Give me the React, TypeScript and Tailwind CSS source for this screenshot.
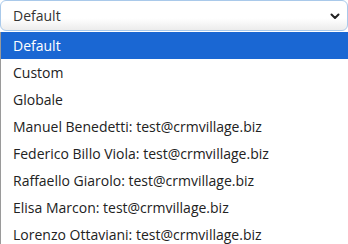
const options = [
  "Default",
  "Custom",
  "Globale",
  "Manuel Benedetti: test@crmvillage.biz",
  "Federico Billo Viola: test@crmvillage.biz",
  "Raffaello Giarolo: test@crmvillage.biz",
  "Elisa Marcon: test@crmvillage.biz",
  "Lorenzo Ottaviani: test@crmvillage.biz",
];

export default function App() {
  return (
    <div className="h-[244px] w-[348px] overflow-hidden bg-white font-['Open_Sans',sans-serif] text-[14px]">
      {/* Select */}
      <div className="flex h-[31px] items-center justify-between rounded-[6px] border border-[#a9c9ea] bg-gradient-to-b from-white from-60% to-[#ececec] pl-[12px] pr-[6px] text-[#333]">
        <span>Default</span>
        <svg width="12" height="12" viewBox="0 0 12 12" fill="none">
          <path d="M2.5 4.5 6 8l3.5-3.5" stroke="#222" strokeWidth="2" strokeLinecap="round" strokeLinejoin="round" />
        </svg>
      </div>

      {/* Dropdown list */}
      <ul className="mt-px border-l border-[#9a9a9a]">
        {options.map((o, i) => (
          <li
            key={o}
            className={
              i === 0
                ? "flex h-[27px] items-center bg-[#1a67d3] pl-[12px] text-white"
                : "flex h-[27px] items-center pl-[12px] text-[#222]"
            }
          >
            {o}
          </li>
        ))}
      </ul>
    </div>
  );
}
